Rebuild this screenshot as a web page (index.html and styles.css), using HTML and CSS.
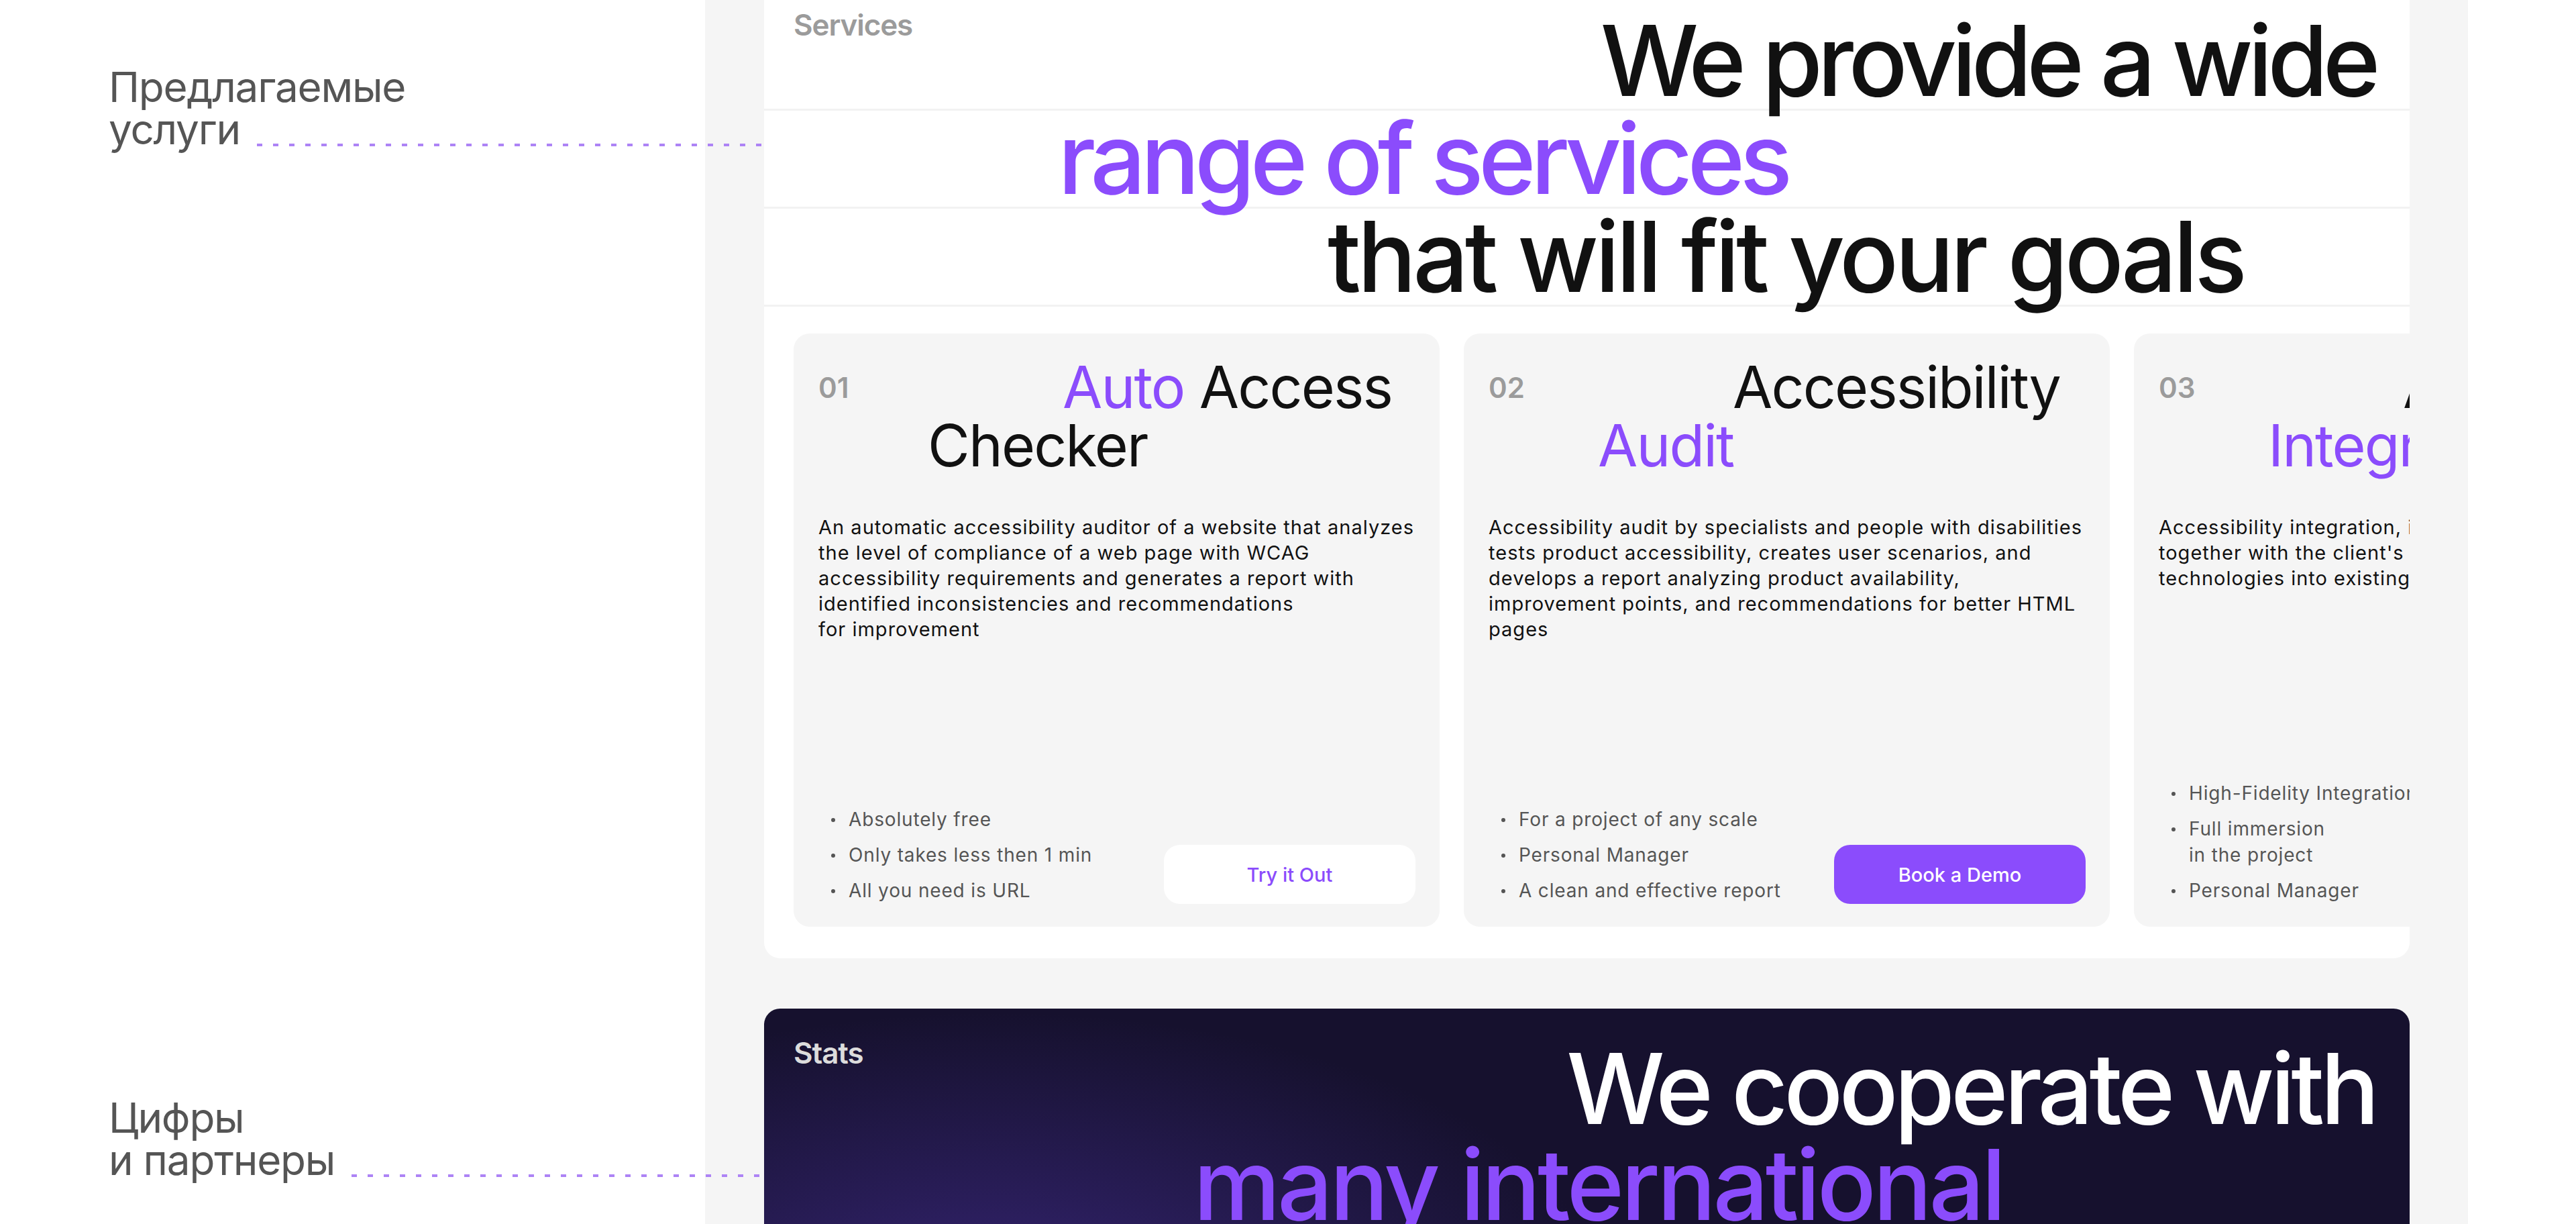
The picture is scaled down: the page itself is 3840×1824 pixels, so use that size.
FILE: index.html
```html
<!DOCTYPE html>
<html lang="en">
<head>
<meta charset="utf-8">
<title>Services and Stats</title>
<link rel="stylesheet" href="styles.css">
</head>
<body>
<div class="page">
  <aside class="notes">
    <p class="note note-services">
      <span class="note-first">Предлагаемые</span>
      <span class="note-last">услуги<span class="note-line"></span></span>
    </p>
    <p class="note note-stats">
      <span class="note-first">Цифры</span>
      <span class="note-last">и партнеры<span class="note-line"></span></span>
    </p>
  </aside>

  <main class="panel">
    <section class="block services">
      <div class="hl-row hl-row-1">
        <span class="eyebrow">Services</span>
        <h2 class="hl-line">We provide a wide</h2>
      </div>
      <div class="hl-row hl-row-2">
        <p class="hl-line accent">range of services</p>
      </div>
      <div class="hl-row hl-row-3">
        <p class="hl-line hl-loose">that will fit your goals</p>
      </div>

      <div class="cards">
        <article class="card">
          <div class="card-top">
            <span class="card-num">01</span>
            <h3 class="card-title"><span class="accent">Auto</span> Access Checker</h3>
          </div>
          <p class="card-desc">An automatic accessibility auditor of a website that analyzes<br>the level of compliance of a web page with WCAG<br>accessibility requirements and generates a report with<br>identified inconsistencies and recommendations<br>for improvement</p>
          <div class="card-foot">
            <ul class="card-list">
              <li>Absolutely free</li>
              <li>Only takes less then 1 min</li>
              <li>All you need is URL</li>
            </ul>
            <a class="btn btn-light" href="#">Try it Out</a>
          </div>
        </article>

        <article class="card">
          <div class="card-top">
            <span class="card-num">02</span>
            <h3 class="card-title">Accessibility <span class="accent">Audit</span></h3>
          </div>
          <p class="card-desc">Accessibility audit by specialists and people with disabilities<br>tests product accessibility, creates user scenarios, and<br>develops a report analyzing product availability,<br>improvement points, and recommendations for better HTML<br>pages</p>
          <div class="card-foot">
            <ul class="card-list">
              <li>For a project of any scale</li>
              <li>Personal Manager</li>
              <li>A clean and effective report</li>
            </ul>
            <a class="btn btn-primary" href="#">Book a Demo</a>
          </div>
        </article>

        <article class="card">
          <div class="card-top">
            <span class="card-num">03</span>
            <h3 class="card-title">Accessibility <span class="accent">Integration</span></h3>
          </div>
          <p class="card-desc">Accessibility integration, including development<br>together with the client's developers of modern<br>technologies into existing products and services</p>
          <div class="card-foot">
            <ul class="card-list">
              <li>High-Fidelity Integration</li>
              <li>Full immersion<br>in the project</li>
              <li>Personal Manager</li>
            </ul>
            <a class="btn btn-primary" href="#">Book a Demo</a>
          </div>
        </article>
      </div>
    </section>

    <section class="block stats">
      <div class="hl-row hl-row-1">
        <span class="eyebrow eyebrow-light">Stats</span>
        <h2 class="hl-line hl-light hl-mid">We cooperate with</h2>
      </div>
      <div class="hl-row hl-row-stats-2">
        <p class="hl-line accent hl-looser">many international</p>
      </div>
    </section>
  </main>
</div>
</body>
</html>
```

FILE: styles.css
```css
* { box-sizing: border-box; }

body {
  margin: 0;
  width: 3840px;
  height: 1824px;
  overflow: hidden;
  background: #ffffff;
  font-family: Inter, "Noto Sans", sans-serif;
  color: #111111;
}

.page {
  display: grid;
  grid-template-columns: 1051px 2628px 1fr;
  height: 1824px;
}

/* left annotations */
.notes {
  position: relative;
  z-index: 1;
  display: flex;
  flex-direction: column;
}

.note {
  margin: 0 -88px 0 0;
  padding-left: 162px;
  font-size: 62px;
  line-height: 63px;
  font-weight: 400;
  letter-spacing: -0.02em;
  color: #555555;
}

.note-services { margin-top: 98px; }
.note-stats { margin-top: 1410px; }

.note-first { display: block; }

.note-last {
  display: flex;
  align-items: flex-end;
}

.note-line {
  flex: 1;
  height: 4px;
  margin: 0 0 6px 25px;
  background: repeating-linear-gradient(90deg, #ad83f5 0 8px, transparent 8px 24px);
}

/* grey panel */
.panel {
  background: #f5f5f5;
  padding: 0 87px 0 88px;
  display: flex;
  flex-direction: column;
  gap: 75px;
  min-width: 0;
}

.block {
  border-radius: 24px;
  overflow: hidden;
  flex-shrink: 0;
}

.services {
  margin-top: -29px;
  background: #ffffff;
  padding-bottom: 47px;
}

.hl-row {
  display: flex;
  border-bottom: 3px solid #f2f2f2;
}

.hl-row-1 {
  padding: 40px 51px 0 44px;
  justify-content: space-between;
  align-items: flex-start;
}

.hl-row-2 { padding-left: 438px; }
.hl-row-3 { padding-left: 840px; }

.eyebrow {
  font-size: 44px;
  line-height: 53px;
  font-weight: 600;
  letter-spacing: -0.025em;
  color: #9b9b9b;
}

.eyebrow-light { color: #dcdcdc; }

.hl-line {
  margin: 0;
  font-size: 146px;
  line-height: 143px;
  font-weight: 500;
  letter-spacing: -0.052em;
  color: #111111;
  white-space: nowrap;
}

.hl-line.hl-loose { letter-spacing: -0.036em; }
.hl-line.hl-mid { letter-spacing: -0.041em; }
.hl-line.hl-looser { letter-spacing: -0.032em; }

.hl-row-1 .hl-line { margin-top: 8px; }

.accent { color: #8b4cfc; }
.hl-line.accent { color: #8b4cfc; }
.hl-light { color: #ffffff; }

/* service cards */
.cards {
  display: flex;
  gap: 36px;
  padding: 0 44px;
  margin-top: 40px;
}

.card {
  flex: 0 0 963px;
  height: 884px;
  background: #f5f5f5;
  border-radius: 24px;
  padding: 37px 36px 34px 37px;
  display: flex;
  flex-direction: column;
}

.card-top {
  display: grid;
  grid-template-columns: 163px 1fr;
}

.card-num {
  margin-top: 19px;
  font-size: 42px;
  line-height: 50px;
  font-weight: 600;
  color: #9b9b9b;
}

.card-title {
  margin: 0;
  font-size: 86px;
  line-height: 87px;
  font-weight: 400;
  letter-spacing: -0.022em;
  text-indent: 201px;
  color: #111111;
}

.card-desc {
  margin: 59px 0 0;
  font-size: 29px;
  line-height: 38px;
  letter-spacing: 0.035em;
  color: #111111;
  white-space: nowrap;
}

.card-foot {
  margin-top: auto;
  display: flex;
  justify-content: space-between;
  align-items: flex-end;
}

.card-list {
  list-style: none;
  margin: 0;
  padding: 0;
  display: flex;
  flex-direction: column;
  gap: 14px;
}

.card-list li {
  position: relative;
  padding-left: 45px;
  font-size: 28px;
  line-height: 39px;
  letter-spacing: 0.03em;
  color: #555555;
  white-space: nowrap;
}

.card-list li::before {
  content: "";
  position: absolute;
  left: 19px;
  top: 17px;
  width: 6px;
  height: 6px;
  border-radius: 50%;
  background: #555555;
}

.btn {
  flex: 0 0 375px;
  height: 88px;
  border-radius: 24px;
  display: flex;
  align-items: center;
  justify-content: center;
  font-size: 29px;
  font-weight: 500;
  text-decoration: none;
}

.btn-light { background: #ffffff; color: #8b4cfc; }
.btn-primary { background: #8b4cfc; color: #ffffff; }

/* stats */
.stats {
  height: 1000px;
  background:
    radial-gradient(ellipse 1300px 620px at 14% 440px, rgba(62, 42, 135, 0.75), rgba(62, 42, 135, 0) 70%),
    #16112e;
}

.stats .hl-row { border-bottom: none; }
.hl-row-stats-2 { padding-left: 640px; }
```
